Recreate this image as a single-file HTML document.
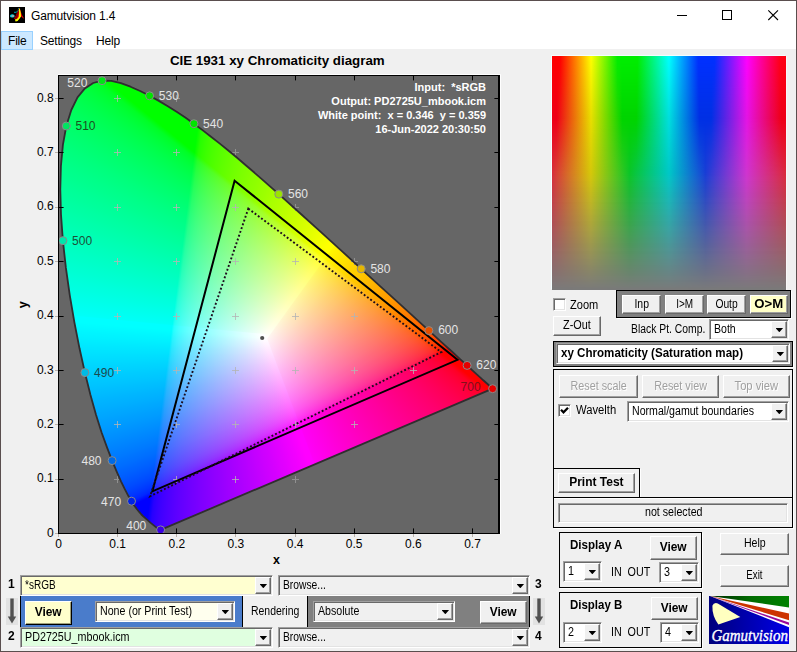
<!DOCTYPE html><html><head><meta charset="utf-8"><title>Gamutvision 1.4</title><style>
*{box-sizing:border-box;margin:0;padding:0}
html,body{width:797px;height:652px;overflow:hidden;background:#f0f0f0}
body{position:relative;font-family:"Liberation Sans",sans-serif;font-size:12px;color:#000}
.a{position:absolute}
.win{position:absolute;left:0;top:0;width:797px;height:652px;border:1px solid #5a4e4e;pointer-events:none}
.tb{position:absolute;left:1px;top:1px;width:795px;height:48px;background:#fff}
.title{position:absolute;left:31px;top:8px;font-size:12px;line-height:16px;white-space:nowrap;letter-spacing:-0.17px}
.menu{position:absolute;top:32px;height:19px;line-height:18px;font-size:12px;white-space:nowrap;letter-spacing:-0.2px}
.t{position:absolute;white-space:nowrap;line-height:14px;font-size:12.5px}
.t>span,.btn>span,.cb>span{display:inline-block;transform:scaleX(.86);transform-origin:0 50%;white-space:nowrap}
.b>span{transform:scaleX(.925)}
.btn>span{transform-origin:50% 50%;position:relative;top:-.8px}
.b{font-weight:bold}
.btn{position:absolute;background:#f0f0f0;border:1px solid;border-color:#fff #696969 #696969 #fff;box-shadow:inset -1px -1px 0 #a0a0a0;text-align:center;font-size:12.5px;white-space:nowrap;display:flex;align-items:center;justify-content:center}
.dis{color:#a0a0a0;text-shadow:1px 1px 0 #fff}
.cb{position:absolute;background:#fff;border:1px solid;border-color:#a0a0a0 #fff #fff #a0a0a0;box-shadow:inset 1px 1px 0 #696969,inset -1px -1px 0 #e3e3e3;font-size:12.5px;line-height:14px;white-space:nowrap;overflow:hidden}
.cb>span{position:absolute;left:3.6px;top:2.4px}
.dd{position:absolute;right:1px;top:1px;bottom:1px;width:16px;background:#f0f0f0;border:1px solid;border-color:#fff #696969 #696969 #fff;box-shadow:inset -1px -1px 0 #a0a0a0}
.dd:after{content:"";position:absolute;left:3.5px;top:6px;width:7.6px;height:4.2px;background:#000;clip-path:polygon(0 0,100% 0,50% 100%)}
.chk{position:absolute;width:13px;height:13px;background:#fff;border:1px solid;border-color:#a0a0a0 #fff #fff #a0a0a0;box-shadow:inset 1px 1px 0 #696969,inset -1px -1px 0 #e3e3e3}
.frame{position:absolute;border:1px solid #000;box-shadow:1px 1px 0 #fff}
.sunk{position:absolute;border:1px solid;border-color:#a0a0a0 #fff #fff #a0a0a0;box-shadow:inset 1px 1px 0 #696969,inset -1px -1px 0 #e3e3e3}
svg text{font-family:"Liberation Sans",sans-serif}
</style></head><body>
<div class="tb"></div>
<svg class="a" style="left:9px;top:7px" width="16" height="16" viewBox="0 0 16 16"><rect width="16" height="16" fill="#000"/><path d="M9.3 3 L10.5 0.8 L11.6 4 L13 8 L15.2 11.8 L13.8 11 L12 9.3 L10 12 L7 12.6 L5 11.6 L7 8.5 L8.4 5 Z" fill="#e80000"/><path d="M9.3 3 L8.4 5 L7 8.5 L5 11.6 L7 12.4 L9 9 L9.8 5 Z" fill="#8a0000"/><path d="M10 1.6 L10.9 1.8 L11.8 6 L12 9.4 L10.6 11.6 L8.6 14 L6.6 14.6 L5.9 12.6 L8 12 L9.7 10 L10.1 6 Z" fill="#ff0"/><path d="M5 5.3h2.6M7.6 4.4h1M8.6 3.2h.9M9.2 1.6h.8" stroke="#00a8b0" stroke-width="1"/><ellipse cx="3.3" cy="8.9" rx="2.3" ry="1.7" fill="#00d8e8"/><ellipse cx="3.9" cy="9" rx="1.5" ry="1.1" fill="#a8a8a8"/></svg>
<div class="title">Gamutvision 1.4</div>
<div class="a" style="left:1px;top:31px;width:32px;height:19px;background:#cce8ff;border:1px solid #99d1ff"></div>
<div class="menu" style="left:8px">File</div><div class="menu" style="left:40px">Settings</div><div class="menu" style="left:96px">Help</div>
<svg class="a" style="left:660px;top:0" width="137" height="30" viewBox="660 0 137 30" fill="none" stroke="#000" stroke-width="1"><path d="M677 15.5H687"/><rect x="722.5" y="10.5" width="9" height="9"/><path d="M768.3 10.3L778 20M778 10.3L768.3 20" stroke-width="1.1"/></svg>
<div class="a" style="left:58px;top:75px;width:442px;height:459px;background:#666"></div>
<div class="a" style="left:0;top:0;width:797px;height:652px;clip-path:polygon(160.6px 529.9px,160.2px 529.9px,159.5px 529.7px,158.0px 528.8px,155.3px 526.6px,150.7px 522.9px,143.3px 516.4px,141.4px 514.5px,139.4px 512.2px,137.0px 509.3px,134.4px 505.7px,131.5px 501.2px,128.3px 495.8px,124.8px 489.2px,121.0px 481.3px,116.8px 471.8px,112.1px 460.6px,107.0px 447.4px,101.5px 432.2px,96.0px 414.7px,90.4px 394.8px,84.9px 372.6px,79.5px 348.3px,74.4px 322.3px,69.8px 295.3px,65.9px 267.9px,62.9px 240.7px,61.0px 214.5px,60.3px 189.6px,60.9px 166.2px,62.9px 144.8px,66.3px 126.0px,71.3px 110.0px,77.5px 97.4px,84.9px 88.4px,93.2px 83.0px,102.0px 80.7px,111.3px 80.9px,120.8px 83.1px,130.5px 86.7px,140.1px 91.0px,149.6px 95.8px,158.8px 100.9px,167.8px 106.2px,176.6px 111.8px,185.3px 117.6px,193.9px 123.7px,202.5px 130.1px,211.0px 136.7px,219.5px 143.4px,228.0px 150.3px,236.5px 157.3px,244.9px 164.5px,253.4px 171.8px,261.8px 179.1px,270.3px 186.6px,278.8px 194.1px,299.8px 213.0px,320.7px 231.9px,341.3px 250.6px,361.2px 268.8px,380.3px 286.3px,398.3px 302.6px,414.7px 317.6px,428.9px 330.6px,441.4px 342.1px,451.9px 351.5px,460.3px 359.3px,467.1px 365.4px,472.4px 370.3px,476.8px 374.3px,480.4px 377.6px,483.3px 380.3px,487.5px 384.0px,489.8px 386.2px,491.8px 388.0px,492.6px 388.7px)"><div class="a" style="left:0;top:0;width:797px;height:652px;clip-path:polygon(258.4px 337.6px,459.0px 899.6px,1335.8px 429.3px,592.6px -144.0px);background:conic-gradient(from 27.30deg at 150.3px 496.7px,#00ff00 8.00deg,#00fa00 8.71deg,#00f400 9.42deg,#00ef00 10.13deg,#00ea00 10.85deg,#00e500 11.56deg,#00e100 12.27deg,#00dc00 12.98deg,#00d700 13.69deg,#00d200 14.40deg,#00ce00 15.12deg,#00c900 15.83deg,#00c500 16.54deg,#00c000 17.25deg,#00bb00 17.96deg,#00b700 18.67deg,#00b200 19.38deg,#00ae00 20.10deg,#00a900 20.81deg,#00a500 21.52deg,#00a000 22.23deg,#009c00 22.94deg,#009700 23.65deg,#009200 24.37deg,#008e00 25.08deg,#008900 25.79deg,#008400 26.50deg,#007f00 27.21deg,#007a00 27.92deg,#007500 28.64deg,#006f00 29.35deg,#006900 30.06deg,#006400 30.77deg,#005d00 31.48deg,#005700 32.19deg,#004f00 32.90deg,#004700 33.62deg,#003e00 34.33deg,#003400 35.04deg,#002600 35.75deg,#000000 36.46deg),conic-gradient(from 129.10deg at 194.4px 152.3px,#000000 0.00deg,#000025 0.77deg,#000033 1.53deg,#00003e 2.30deg,#000046 3.07deg,#00004e 3.84deg,#000055 4.60deg,#00005c 5.37deg,#000062 6.14deg,#000068 6.91deg,#00006e 7.67deg,#000073 8.44deg,#000078 9.21deg,#00007d 9.98deg,#000082 10.74deg,#000087 11.51deg,#00008c 12.28deg,#000091 13.05deg,#000095 13.81deg,#00009a 14.58deg,#00009f 15.35deg,#0000a3 16.12deg,#0000a8 16.88deg,#0000ac 17.65deg,#0000b1 18.42deg,#0000b5 19.18deg,#0000ba 19.95deg,#0000be 20.72deg,#0000c3 21.49deg,#0000c8 22.25deg,#0000cc 23.02deg,#0000d1 23.79deg,#0000d6 24.56deg,#0000db 25.32deg,#0000e0 26.09deg,#0000e5 26.86deg,#0000ea 27.63deg,#0000ef 28.39deg,#0000f4 29.16deg,#0000f9 29.93deg,#0000ff 30.70deg,#0000ff 38.70deg,#000 38.70deg),#f00;background-blend-mode:screen,screen,normal"></div><div class="a" style="left:0;top:0;width:797px;height:652px;clip-path:polygon(264.4px 342.4px,-275.1px 303.0px,-147.1px -776.0px,607.5px -132.0px);background:conic-gradient(from 7.30deg at 150.3px 496.7px,#000000 0.00deg,#260000 0.70deg,#340000 1.40deg,#3f0000 2.10deg,#480000 2.80deg,#500000 3.50deg,#570000 4.20deg,#5e0000 4.90deg,#640000 5.60deg,#6a0000 6.30deg,#700000 7.00deg,#750000 7.70deg,#7b0000 8.40deg,#800000 9.10deg,#850000 9.80deg,#8a0000 10.50deg,#8e0000 11.20deg,#930000 11.90deg,#980000 12.60deg,#9c0000 13.30deg,#a10000 14.00deg,#a60000 14.70deg,#aa0000 15.40deg,#af0000 16.10deg,#b30000 16.80deg,#b80000 17.50deg,#bc0000 18.20deg,#c10000 18.90deg,#c50000 19.60deg,#ca0000 20.30deg,#ce0000 21.00deg,#d30000 21.70deg,#d80000 22.40deg,#dc0000 23.10deg,#e10000 23.80deg,#e60000 24.50deg,#eb0000 25.20deg,#f00000 25.90deg,#f50000 26.60deg,#fa0000 27.30deg,#ff0000 28.00deg,#ff0000 36.00deg,#000 36.00deg),conic-gradient(from 266.87deg at 441.6px 353.2px,#0000ff 8.00deg,#0000fa 8.86deg,#0000f4 9.71deg,#0000ef 10.57deg,#0000ea 11.42deg,#0000e5 12.28deg,#0000e0 13.14deg,#0000dc 13.99deg,#0000d7 14.85deg,#0000d2 15.70deg,#0000ce 16.56deg,#0000c9 17.42deg,#0000c5 18.27deg,#0000c0 19.13deg,#0000bc 19.98deg,#0000b7 20.84deg,#0000b3 21.70deg,#0000ae 22.55deg,#0000aa 23.41deg,#0000a5 24.26deg,#0000a1 25.12deg,#00009c 25.97deg,#000098 26.83deg,#000093 27.69deg,#00008e 28.54deg,#00008a 29.40deg,#000085 30.25deg,#000080 31.11deg,#00007b 31.97deg,#000075 32.82deg,#000070 33.68deg,#00006a 34.53deg,#000064 35.39deg,#00005e 36.25deg,#000057 37.10deg,#000050 37.96deg,#000048 38.81deg,#00003f 39.67deg,#000034 40.53deg,#000026 41.38deg,#000000 42.24deg),#0f0;background-blend-mode:screen,screen,normal"></div><div class="a" style="left:0;top:0;width:797px;height:652px;clip-path:polygon(265.4px 334.1px,-272.4px 282.3px,-411.8px 1290.6px,476.4px 891.0px);background:conic-gradient(from 151.80deg at 194.4px 152.3px,#ff0000 8.00deg,#fa0000 8.69deg,#f50000 9.37deg,#f00000 10.06deg,#ec0000 10.75deg,#e70000 11.44deg,#e20000 12.12deg,#de0000 12.81deg,#d90000 13.50deg,#d40000 14.19deg,#d00000 14.87deg,#cc0000 15.56deg,#c70000 16.25deg,#c30000 16.94deg,#be0000 17.62deg,#ba0000 18.31deg,#b50000 19.00deg,#b10000 19.69deg,#ac0000 20.37deg,#a80000 21.06deg,#a30000 21.75deg,#9f0000 22.44deg,#9a0000 23.12deg,#950000 23.81deg,#910000 24.50deg,#8c0000 25.19deg,#870000 25.87deg,#820000 26.56deg,#7d0000 27.25deg,#770000 27.94deg,#720000 28.62deg,#6c0000 29.31deg,#660000 30.00deg,#600000 30.69deg,#590000 31.37deg,#510000 32.06deg,#490000 32.75deg,#400000 33.44deg,#350000 34.12deg,#270000 34.81deg,#000000 35.50deg),conic-gradient(from 243.76deg at 441.6px 353.2px,#000000 0.00deg,#002700 0.78deg,#003600 1.56deg,#004100 2.33deg,#004b00 3.11deg,#005300 3.89deg,#005a00 4.67deg,#006100 5.44deg,#006700 6.22deg,#006e00 7.00deg,#007300 7.78deg,#007900 8.55deg,#007e00 9.33deg,#008300 10.11deg,#008800 10.89deg,#008d00 11.66deg,#009200 12.44deg,#009700 13.22deg,#009c00 14.00deg,#00a000 14.77deg,#00a500 15.55deg,#00a900 16.33deg,#00ae00 17.11deg,#00b200 17.88deg,#00b600 18.66deg,#00bb00 19.44deg,#00bf00 20.22deg,#00c400 20.99deg,#00c800 21.77deg,#00cc00 22.55deg,#00d100 23.33deg,#00d500 24.10deg,#00da00 24.88deg,#00de00 25.66deg,#00e300 26.44deg,#00e700 27.22deg,#00ec00 27.99deg,#00f100 28.77deg,#00f500 29.55deg,#00fa00 30.33deg,#00ff00 31.10deg,#00ff00 39.10deg,#000 39.10deg),#00f;background-blend-mode:screen,screen,normal"></div></div>
<svg class="a" style="left:0;top:0" width="797" height="652" viewBox="0 0 797 652"><defs><clipPath id="hs"><polygon points="160.6,529.9 160.2,529.9 159.5,529.7 158.0,528.8 155.3,526.6 150.7,522.9 143.3,516.4 141.4,514.5 139.4,512.2 137.0,509.3 134.4,505.7 131.5,501.2 128.3,495.8 124.8,489.2 121.0,481.3 116.8,471.8 112.1,460.6 107.0,447.4 101.5,432.2 96.0,414.7 90.4,394.8 84.9,372.6 79.5,348.3 74.4,322.3 69.8,295.3 65.9,267.9 62.9,240.7 61.0,214.5 60.3,189.6 60.9,166.2 62.9,144.8 66.3,126.0 71.3,110.0 77.5,97.4 84.9,88.4 93.2,83.0 102.0,80.7 111.3,80.9 120.8,83.1 130.5,86.7 140.1,91.0 149.6,95.8 158.8,100.9 167.8,106.2 176.6,111.8 185.3,117.6 193.9,123.7 202.5,130.1 211.0,136.7 219.5,143.4 228.0,150.3 236.5,157.3 244.9,164.5 253.4,171.8 261.8,179.1 270.3,186.6 278.8,194.1 299.8,213.0 320.7,231.9 341.3,250.6 361.2,268.8 380.3,286.3 398.3,302.6 414.7,317.6 428.9,330.6 441.4,342.1 451.9,351.5 460.3,359.3 467.1,365.4 472.4,370.3 476.8,374.3 480.4,377.6 483.3,380.3 487.5,384.0 489.8,386.2 491.8,388.0 492.6,388.7"/></clipPath><clipPath id="pa"><rect x="59" y="76" width="440" height="457"/></clipPath></defs><g clip-path="url(#pa)"><path d="M114.0 424.5h7M117.5 421.0v7M114.0 370.5h7M117.5 367.0v7M114.0 316.5h7M117.5 313.0v7M114.0 261.5h7M117.5 258.0v7M114.0 207.5h7M117.5 204.0v7M114.0 152.5h7M117.5 149.0v7M114.0 98.5h7M117.5 95.0v7M173.0 479.5h7M176.5 476.0v7M173.0 424.5h7M176.5 421.0v7M173.0 370.5h7M176.5 367.0v7M173.0 316.5h7M176.5 313.0v7M173.0 261.5h7M176.5 258.0v7M173.0 207.5h7M176.5 204.0v7M173.0 152.5h7M176.5 149.0v7M232.0 479.5h7M235.5 476.0v7M232.0 424.5h7M235.5 421.0v7M232.0 370.5h7M235.5 367.0v7M232.0 316.5h7M235.5 313.0v7M232.0 261.5h7M235.5 258.0v7M232.0 207.5h7M235.5 204.0v7M292.0 424.5h7M295.5 421.0v7M292.0 370.5h7M295.5 367.0v7M292.0 316.5h7M295.5 313.0v7M292.0 261.5h7M295.5 258.0v7M351.0 424.5h7M354.5 421.0v7M351.0 370.5h7M354.5 367.0v7M351.0 316.5h7M354.5 313.0v7M410.0 370.5h7M413.5 367.0v7" stroke="#b4b4b4" stroke-width="1" fill="none" opacity=".8"/><path d="M114.0 479.5h7M117.5 476.0v7M173.0 98.5h7M176.5 95.0v7M232.0 152.5h7M235.5 149.0v7M292.0 479.5h7M295.5 476.0v7M292.0 207.5h7M295.5 204.0v7M351.0 261.5h7M354.5 258.0v7" stroke="#909090" stroke-width="1" fill="none"/><polygon points="160.6,529.9 160.2,529.9 159.5,529.7 158.0,528.8 155.3,526.6 150.7,522.9 143.3,516.4 141.4,514.5 139.4,512.2 137.0,509.3 134.4,505.7 131.5,501.2 128.3,495.8 124.8,489.2 121.0,481.3 116.8,471.8 112.1,460.6 107.0,447.4 101.5,432.2 96.0,414.7 90.4,394.8 84.9,372.6 79.5,348.3 74.4,322.3 69.8,295.3 65.9,267.9 62.9,240.7 61.0,214.5 60.3,189.6 60.9,166.2 62.9,144.8 66.3,126.0 71.3,110.0 77.5,97.4 84.9,88.4 93.2,83.0 102.0,80.7 111.3,80.9 120.8,83.1 130.5,86.7 140.1,91.0 149.6,95.8 158.8,100.9 167.8,106.2 176.6,111.8 185.3,117.6 193.9,123.7 202.5,130.1 211.0,136.7 219.5,143.4 228.0,150.3 236.5,157.3 244.9,164.5 253.4,171.8 261.8,179.1 270.3,186.6 278.8,194.1 299.8,213.0 320.7,231.9 341.3,250.6 361.2,268.8 380.3,286.3 398.3,302.6 414.7,317.6 428.9,330.6 441.4,342.1 451.9,351.5 460.3,359.3 467.1,365.4 472.4,370.3 476.8,374.3 480.4,377.6 483.3,380.3 487.5,384.0 489.8,386.2 491.8,388.0 492.6,388.7" fill="none" stroke="#302e30" stroke-width="1.8" stroke-linejoin="round"/><polygon points="234.6,180.7 457.5,359.8 152.4,491.3" fill="none" stroke="#000" stroke-width="2" stroke-linejoin="miter"/><polygon points="248.3,208.6 441.3,352.1 150,496.3" fill="none" stroke="#1c0c1c" stroke-width="1.9" stroke-dasharray="1.9 2.1"/><circle cx="262.2" cy="338.0" r="2.1" fill="#505050"/><circle cx="160.6" cy="529.9" r="4" fill="#3b00e5" stroke="#8a8a8a" stroke-width="1"/><text x="146.3" y="530.4" font-size="12" fill="#e4e4e4" text-anchor="end">400</text><circle cx="131.5" cy="501.2" r="4" fill="#0022e5" stroke="#8a8a8a" stroke-width="1"/><text x="121.1" y="505.5" font-size="12" fill="#e4e4e4" text-anchor="end">470</text><circle cx="112.1" cy="460.6" r="4" fill="#006ae5" stroke="#8a8a8a" stroke-width="1"/><text x="101.5" y="464.9" font-size="12" fill="#e4e4e4" text-anchor="end">480</text><circle cx="84.9" cy="372.6" r="4" fill="#00bbe5" stroke="#8a8a8a" stroke-width="1"/><text x="94.1" y="376.6" font-size="12" fill="#1c4a50">490</text><circle cx="62.9" cy="240.7" r="4" fill="#00e5aa" stroke="#8a8a8a" stroke-width="1"/><text x="72.1" y="244.7" font-size="12" fill="#1c5038">500</text><circle cx="66.3" cy="126.0" r="4" fill="#00e561" stroke="#8a8a8a" stroke-width="1"/><text x="75.5" y="130.0" font-size="12" fill="#1c5020">510</text><circle cx="102.0" cy="80.7" r="4" fill="#00e516" stroke="#8a8a8a" stroke-width="1"/><text x="87.4" y="87.3" font-size="12" fill="#e4e4e4" text-anchor="end">520</text><circle cx="149.6" cy="95.8" r="4" fill="#00e500" stroke="#8a8a8a" stroke-width="1"/><text x="158.8" y="99.8" font-size="12" fill="#e4e4e4">530</text><circle cx="193.9" cy="123.7" r="4" fill="#00e500" stroke="#8a8a8a" stroke-width="1"/><text x="203.1" y="127.7" font-size="12" fill="#e4e4e4">540</text><circle cx="278.8" cy="194.1" r="4" fill="#9ae500" stroke="#8a8a8a" stroke-width="1"/><text x="288.0" y="198.1" font-size="12" fill="#e4e4e4">560</text><circle cx="361.2" cy="268.8" r="4" fill="#e5b600" stroke="#8a8a8a" stroke-width="1"/><text x="370.4" y="272.6" font-size="12" fill="#e4e4e4">580</text><circle cx="428.9" cy="330.6" r="4" fill="#e55000" stroke="#8a8a8a" stroke-width="1"/><text x="438.2" y="334.4" font-size="12" fill="#e4e4e4">600</text><circle cx="467.1" cy="365.4" r="4" fill="#e50000" stroke="#8a8a8a" stroke-width="1"/><text x="476.3" y="369.2" font-size="12" fill="#e4e4e4">620</text><circle cx="492.6" cy="388.7" r="4" fill="#e50000" stroke="#8a8a8a" stroke-width="1"/><text x="480.6" y="391.4" font-size="12" fill="#80101c" text-anchor="end">700</text></g><path d="M117.5 533v-4.6M117.5 76v4.4M176.5 533v-4.6M176.5 76v4.4M235.5 533v-4.6M235.5 76v4.4M295.5 533v-4.6M295.5 76v4.4M354.5 533v-4.6M354.5 76v4.4M413.5 533v-4.6M413.5 76v4.4M472.5 533v-4.6M472.5 76v4.4M59 479.5h4.6M499 479.5h-4.6M59 424.5h4.6M499 424.5h-4.6M59 370.5h4.6M499 370.5h-4.6M59 316.5h4.6M499 316.5h-4.6M59 261.5h4.6M499 261.5h-4.6M59 207.5h4.6M499 207.5h-4.6M59 152.5h4.6M499 152.5h-4.6M59 98.5h4.6M499 98.5h-4.6" stroke="#000" stroke-width="1" fill="none"/><path d="M58.5 534v3M117.5 534v3M176.5 534v3M235.5 534v3M295.5 534v3M354.5 534v3M413.5 534v3M472.5 534v3M58 533.5h-3M58 479.5h-3M58 424.5h-3M58 370.5h-3M58 316.5h-3M58 261.5h-3M58 207.5h-3M58 152.5h-3M58 98.5h-3" stroke="#b9b2ab" stroke-width="1" fill="none"/><rect x="58.5" y="75.5" width="441" height="458" fill="none" stroke="#000" stroke-width="1"/><path d="M498.5 76V533" stroke="#000" stroke-width="1" fill="none"/><path d="M58 74.5H500.5V534" stroke="#fff" stroke-width="1" fill="none"/><text x="58.5" y="548" font-size="12" text-anchor="middle">0</text><text x="117.6" y="548" font-size="12" text-anchor="middle">0.1</text><text x="176.8" y="548" font-size="12" text-anchor="middle">0.2</text><text x="235.9" y="548" font-size="12" text-anchor="middle">0.3</text><text x="295.1" y="548" font-size="12" text-anchor="middle">0.4</text><text x="354.2" y="548" font-size="12" text-anchor="middle">0.5</text><text x="413.3" y="548" font-size="12" text-anchor="middle">0.6</text><text x="472.5" y="548" font-size="12" text-anchor="middle">0.7</text><text x="53.6" y="536.6" font-size="12" text-anchor="end">0</text><text x="53.6" y="482.2" font-size="12" text-anchor="end">0.1</text><text x="53.6" y="427.9" font-size="12" text-anchor="end">0.2</text><text x="53.6" y="373.5" font-size="12" text-anchor="end">0.3</text><text x="53.6" y="319.1" font-size="12" text-anchor="end">0.4</text><text x="53.6" y="264.7" font-size="12" text-anchor="end">0.5</text><text x="53.6" y="210.3" font-size="12" text-anchor="end">0.6</text><text x="53.6" y="156.0" font-size="12" text-anchor="end">0.7</text><text x="53.6" y="101.6" font-size="12" text-anchor="end">0.8</text><text x="276.5" y="563.8" font-size="12.5" font-weight="bold" text-anchor="middle">x</text><text transform="translate(26.8,304.8) rotate(-90)" font-size="12.5" font-weight="bold" text-anchor="middle">y</text><text x="277.3" y="65.4" font-size="13.33" font-weight="bold" text-anchor="middle">CIE 1931 xy Chromaticity diagram</text><text x="486" y="91.0" font-size="11" font-weight="bold" fill="#fff" text-anchor="end" xml:space="preserve">Input:  *sRGB</text><text x="486" y="104.9" font-size="11" font-weight="bold" fill="#fff" text-anchor="end" xml:space="preserve">Output: PD2725U_mbook.icm</text><text x="486" y="118.8" font-size="11" font-weight="bold" fill="#fff" text-anchor="end" xml:space="preserve">White point:  x = 0.346  y = 0.359</text><text x="486" y="132.7" font-size="11" font-weight="bold" fill="#fff" text-anchor="end" xml:space="preserve">16-Jun-2022 20:30:50</text></svg>
<div class="a" style="left:552px;top:56px;width:234px;height:234px;background:#7a7a7a;box-shadow:-1px -1px 0 #f4ffff,1px 0 0 #f8f8f8"><div class="a" style="left:0;top:0;width:234px;height:234px;background:linear-gradient(to right,#d82d3c 0%,#d6c80a 16.6%,#0ac628 33.2%,#00c8c8 50%,#193ed6 65.6%,#d034d0 83.2%,#da2a3c 100%);-webkit-mask-image:linear-gradient(to bottom,#000 0%,#000 50%,transparent 100%);mask-image:linear-gradient(to bottom,#000 0%,#000 50%,transparent 100%)"></div><div class="a" style="left:0;top:0;width:234px;height:234px;background:linear-gradient(to right,#ee0018 0%,#ee0018 2%,#e8de00 16.7%,#00d400 30%,#00d400 36%,#00dede 50%,#0030e4 63%,#0030e4 68%,#e414e4 83.3%,#ee0018 98%,#ee0018 100%);-webkit-mask-image:linear-gradient(to bottom,#000 0%,#000 27%,transparent 50%);mask-image:linear-gradient(to bottom,#000 0%,#000 27%,transparent 50%)"></div><div class="a" style="left:0;top:0;width:234px;height:234px;background:linear-gradient(to right,#f00 0%,#f00 3.5%,#ff0 16.7%,#00ee00 28%,#00ee00 36.5%,#0ff 50%,#0030ff 62.5%,#0030ff 69.5%,#f0f 83.3%,#ff0018 97.5%,#ff0010 100%);-webkit-mask-image:linear-gradient(to bottom,#000 0%,#000 0%,transparent 27%);mask-image:linear-gradient(to bottom,#000 0%,#000 0%,transparent 27%)"></div></div>
<div class="chk" style="left:553px;top:298px"></div>
<div class="t " style="left:570px;top:298px;"><span style="transform:scaleX(0.883)">Zoom</span></div>
<div class="frame" style="left:616px;top:290px;width:175px;height:28px;background:#808080"></div>
<div class="btn " style="left:622px;top:295px;width:39px;height:19px;"><span style="transform:scaleX(0.834)">Inp</span></div>
<div class="btn " style="left:665px;top:295px;width:39px;height:19px;"><span style="transform:scaleX(0.798)">I&gt;M</span></div>
<div class="btn " style="left:707px;top:295px;width:39px;height:19px;"><span style="transform:scaleX(0.823)">Outp</span></div>
<div class="btn b" style="left:750px;top:295px;width:38px;height:19px;background:#ffffc8"><span style="transform:scaleX(1.053)">O&gt;M</span></div>
<div class="btn " style="left:553px;top:316px;width:48px;height:20px;"><span style="transform:scaleX(0.870)">Z-Out</span></div>
<div class="t " style="left:630.5px;top:322.4px;"><span style="transform:scaleX(0.829)">Black Pt. Comp.</span></div>
<div class="cb " style="left:709px;top:319px;width:80px;height:21px;background:#fff"><span style="transform:scaleX(0.844)">Both</span><i class="dd"></i></div>
<div class="frame" style="left:553px;top:341px;width:240px;height:26px;background:#808080"></div>
<div class="cb b" style="left:556px;top:343px;width:234px;height:21px;background:#fff"><span style="transform:scaleX(0.926)">xy Chromaticity (Saturation map)</span><i class="dd"></i></div>
<div class="frame" style="left:553px;top:369px;width:240px;height:129px"></div>
<div class="btn dis" style="left:559px;top:375px;width:79px;height:23px;"><span style="transform:scaleX(0.862)">Reset scale</span></div>
<div class="btn dis" style="left:642px;top:375px;width:77px;height:23px;"><span style="transform:scaleX(0.864)">Reset view</span></div>
<div class="btn dis" style="left:723px;top:375px;width:67px;height:23px;"><span style="transform:scaleX(0.896)">Top view</span></div>
<div class="chk" style="left:558px;top:404px"><svg width="11" height="11" viewBox="0 0 11 11" style="position:absolute;left:0;top:0"><path d="M2 4.8 L4.5 7.3 L9 2.8" stroke="#000" stroke-width="2.3" fill="none"/></svg></div>
<div class="t " style="left:576px;top:402.6px;"><span style="transform:scaleX(0.900)">Wavelth</span></div>
<div class="cb " style="left:627px;top:401px;width:162px;height:21px;background:#fff"><span style="transform:scaleX(0.848)">Normal/gamut boundaries</span><i class="dd"></i></div>
<div class="frame" style="left:553px;top:468px;width:87px;height:30px"></div>
<div class="btn b" style="left:558px;top:473px;width:77px;height:20px;"><span style="transform:scaleX(0.959)">Print Test</span></div>
<div class="frame" style="left:553px;top:497px;width:240px;height:31px"></div>
<div class="sunk" style="left:558px;top:503px;width:230px;height:20px"></div>
<div class="t " style="left:644.7px;top:505.1px;"><span style="transform:scaleX(0.853)">not selected</span></div>
<div class="frame" style="left:559px;top:532px;width:143px;height:56px"></div>
<div class="t b" style="left:570px;top:537.5px;"><span style="transform:scaleX(0.926)">Display A</span></div>
<div class="btn b" style="left:650px;top:536px;width:47px;height:24px;"><span style="transform:scaleX(0.955)">View</span></div>
<div class="cb " style="left:563px;top:561px;width:39px;height:21px;background:#fff"><span>1</span><i class="dd"></i></div>
<div class="t " style="left:611.3px;top:564.5px;word-spacing:3.3px"><span>IN OUT</span></div>
<div class="cb " style="left:659px;top:562px;width:40px;height:21px;background:#fff"><span>3</span><i class="dd"></i></div>
<div class="frame" style="left:559px;top:592px;width:143px;height:56px"></div>
<div class="t b" style="left:570px;top:597.5px;"><span style="transform:scaleX(0.918)">Display B</span></div>
<div class="btn b" style="left:651px;top:597px;width:47px;height:23px;"><span style="transform:scaleX(0.955)">View</span></div>
<div class="cb " style="left:563px;top:622px;width:39px;height:21px;background:#fff"><span>2</span><i class="dd"></i></div>
<div class="t " style="left:611.3px;top:624.5px;word-spacing:3.3px"><span>IN OUT</span></div>
<div class="cb " style="left:660px;top:622px;width:39px;height:21px;background:#fff"><span>4</span><i class="dd"></i></div>
<div class="btn " style="left:720px;top:533px;width:69px;height:22px;"><span style="transform:scaleX(0.848)">Help</span></div>
<div class="btn " style="left:720px;top:565px;width:69px;height:22px;"><span style="transform:scaleX(0.773)">Exit</span></div>
<svg class="a" style="left:709px;top:596px" width="80" height="48" viewBox="0 0 80 48"><defs><linearGradient id="lb" x1="0" x2="1" y1="0" y2="0"><stop offset="0" stop-color="#00007c"/><stop offset="1" stop-color="#0000e6"/></linearGradient><linearGradient id="lg" x1="0" x2="1" y1="0" y2="0"><stop offset="0" stop-color="#002800"/><stop offset=".5" stop-color="#006a00"/><stop offset="1" stop-color="#008200"/></linearGradient></defs><rect width="80" height="48" fill="url(#lb)"/><polygon points="1,0 80,0 80,31.2" fill="#fff"/><polygon points="1,0 80,0 80,11.4" fill="url(#lg)"/><polygon points="1,0 80,17.5 80,24.2" fill="#cc3300"/><polygon points="1,0 80,26.6 80,29" fill="#9a0a9a"/><path d="M31.3 21 L8.8 7.4 Q4.6 6.2 3.4 9.8 Q3 20 9.4 28.6 Z" fill="#ffffc0"/><text x="2.4" y="44.6" font-size="16" font-style="italic" fill="#fff" stroke="#fff" stroke-width=".35" style="font-family:'Liberation Serif',serif" textLength="76.5" lengthAdjust="spacingAndGlyphs">Gamutvision</text></svg>
<div class="t b" style="left:8px;top:577px;font-size:13px"><span>1</span></div>
<div class="t b" style="left:8px;top:629px;font-size:13px"><span>2</span></div>
<div class="t b" style="left:535px;top:577px;font-size:13px"><span>3</span></div>
<div class="t b" style="left:535px;top:629px;font-size:13px"><span>4</span></div>
<div class="cb " style="left:20px;top:575px;width:253px;height:21px;background:#ffffd0"><span style="transform:scaleX(0.801)">*sRGB</span><i class="dd"></i></div>
<div class="cb " style="left:20px;top:627px;width:253px;height:21px;background:#e0ffe0"><span style="transform:scaleX(0.859)">PD2725U_mbook.icm</span><i class="dd"></i></div>
<div class="cb " style="left:278px;top:575px;width:252px;height:21px;background:#f0f0f0"><span style="transform:scaleX(0.823)">Browse...</span><i class="dd"></i></div>
<div class="cb " style="left:278px;top:627px;width:252px;height:21px;background:#f0f0f0"><span style="transform:scaleX(0.823)">Browse...</span><i class="dd"></i></div>
<div class="a" style="left:20px;top:596px;width:223px;height:31px;background:#4a7ccb;border-left:1px solid #000;border-right:1px solid #000"></div>
<div class="btn b" style="left:25px;top:601px;width:47px;height:24px;background:#ffffcc;border-color:#fff #000 #000 #fff;box-shadow:inset -1px -1px 0 #a0a078"><span style="transform:scaleX(0.955)">View</span></div>
<div class="cb " style="left:95px;top:601px;width:140px;height:21px;background:#ffffee"><span style="transform:scaleX(0.851)">None (or Print Test)</span><i class="dd"></i></div>
<div class="t " style="left:250.5px;top:604px;"><span style="transform:scaleX(0.837)">Rendering</span></div>
<div class="a" style="left:307px;top:596px;width:223px;height:31px;background:#808080;border-left:1px solid #000;border-right:1px solid #000"></div>
<div class="cb " style="left:313px;top:601px;width:142px;height:21px;background:#f0f0f0"><span style="transform:scaleX(0.851)">Absolute</span><i class="dd"></i></div>
<div class="btn b" style="left:480px;top:601px;width:47px;height:23px;"><span style="transform:scaleX(0.955)">View</span></div>
<svg class="a" style="left:6px;top:598px" width="12" height="27" viewBox="0 0 12 27"><rect width="12" height="27" fill="#e2e2e2"/><path d="M6 0.5V20" stroke="#505050" stroke-width="3.4"/><path d="M1.8 18.6 L6 25.6 L10.2 18.6 Z" fill="#505050"/></svg>
<svg class="a" style="left:533px;top:598px" width="12" height="27" viewBox="0 0 12 27"><rect width="12" height="27" fill="#e2e2e2"/><path d="M6 0.5V20" stroke="#505050" stroke-width="3.4"/><path d="M1.8 18.6 L6 25.6 L10.2 18.6 Z" fill="#505050"/></svg>
<div class="win"></div>
</body></html>
